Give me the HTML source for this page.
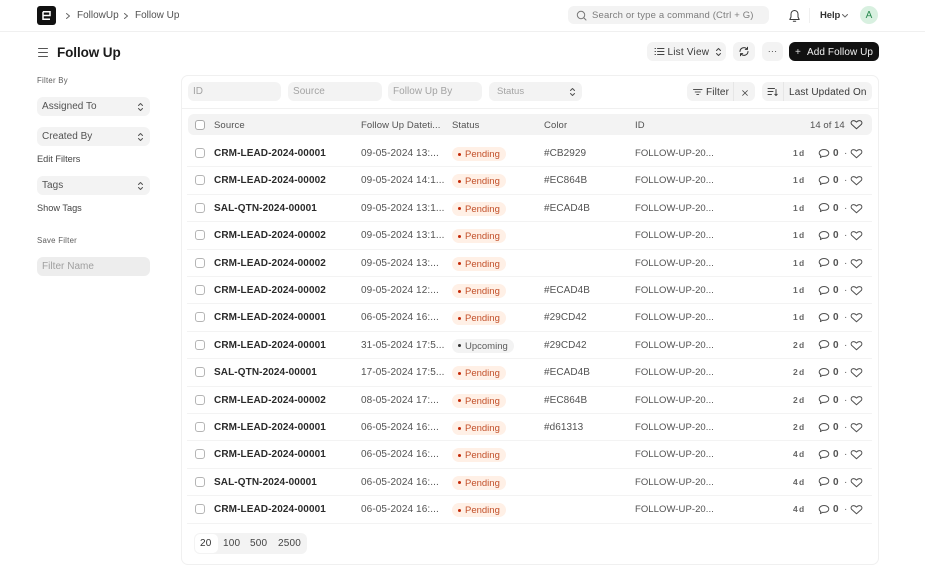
<!DOCTYPE html>
<html><head><meta charset="utf-8"><style>
*{box-sizing:border-box}
html,body{margin:0;padding:0;width:925px;height:572px;overflow:hidden;background:#fff;font-family:"Liberation Sans",sans-serif;color:#383838}
.a{position:absolute;white-space:nowrap}
.t{font-size:10px;line-height:12px;letter-spacing:0}
.box{position:absolute;background:#f3f3f3;border-radius:6px;height:19px;font-size:10px;line-height:20px;letter-spacing:.03px;padding-left:5px;color:#525252}
.ph{color:#a3a3a3}
.r{position:absolute;left:187px;width:685px;height:27.4px}
.r>*{position:absolute;white-space:nowrap}
.cb{left:8px;top:8px;width:10px;height:10px;border:1px solid #b5b5b5;border-radius:3px;background:#fff}
.s{left:27px;top:8px;font-weight:bold;font-size:10px;line-height:12px;letter-spacing:.1px;color:#2b2b2b}
.d{left:174px;top:8px;font-size:10px;line-height:12px;letter-spacing:.1px;color:#525252}
.b{left:265px;top:7px;height:14px;border-radius:7px;font-size:9.5px;line-height:15px;padding:0 6px 0 13px;letter-spacing:0;background:#fff0e6;color:#c2502a}
.b:before{content:"";position:absolute;left:5.5px;top:5.5px;width:3px;height:3px;border-radius:50%;background:#c52a08}
.b.u{background:#f3f3f3;color:#5c5c5c}.b.u:before{background:#333}
.c{left:357px;top:8px;font-size:10px;line-height:12px;letter-spacing:.05px;color:#525252}
.i{left:448px;top:8px;font-size:9.5px;line-height:12px;letter-spacing:.06px;color:#525252}
.w{left:606px;top:7px;font-size:8.5px;line-height:12px;font-weight:bold;word-spacing:-1.5px;letter-spacing:.2px;color:#666}
.n{left:646px;top:8px;font-size:10px;line-height:12px;font-weight:bold;color:#525252}
.o{left:657px;top:8px;font-size:10px;line-height:12px;color:#666}
svg.m{left:631px;top:7.5px}svg.h{left:663px;top:8px}
.l{left:0;right:0;bottom:0;height:1px;background:#f3f3f3}
svg{fill:none;stroke:#525252;stroke-width:1;stroke-linecap:round;stroke-linejoin:round}
.updn{position:absolute;right:6px;top:5px}
.hd{position:absolute;top:120px;font-size:9.5px;line-height:12px;color:#525252;letter-spacing:.1px}
</style></head><body>

<svg width="0" height="0" style="position:absolute"><defs>
<symbol id="bub" viewBox="0 0 12 12"><path d="M6 1.5C3.2 1.5 1.2 3.1 1.2 5C1.2 6.1 1.8 7 2.8 7.6L2.4 9.6L4.6 8.3C5 8.4 5.5 8.4 6 8.4C8.8 8.4 10.8 6.9 10.8 5C10.8 3.1 8.8 1.5 6 1.5Z"/></symbol>
<symbol id="hrt" viewBox="0 0 13 12"><path d="M6.5 9.8L1.5 5.2C.5 3.6 1.5 1.6 3.5 1.6C5 1.6 6 2.5 6.5 3.1C7 2.5 8 1.6 9.5 1.6C11.5 1.6 12.5 3.6 11.5 5.2Z"/></symbol>
<symbol id="ud" viewBox="0 0 7 10"><path d="M1.5 3.5L3.5 1.5L5.5 3.5M1.5 6.5L3.5 8.5L5.5 6.5"/></symbol>
</defs></svg>

<!-- navbar -->
<div class="a" style="left:0;top:31px;width:925px;height:1px;background:#f0f0f0"></div>
<div class="a" style="left:37px;top:6px;width:19px;height:19px;background:#111;border-radius:3px"></div>
<svg class="a" style="left:37px;top:6px;stroke:#fff;stroke-width:1.5;stroke-linecap:butt;stroke-linejoin:miter" width="19" height="19"><path d="M6 5.8H13V9.5H6.7M13 13.2H6V5.8"/></svg>
<svg class="a" style="left:65px;top:12px;stroke:#666" width="6" height="8"><path d="M1.5 1.5L4.5 4L1.5 6.5"/></svg>
<div class="a t" style="left:77px;top:10px;color:#525252">FollowUp</div>
<svg class="a" style="left:123px;top:12px;stroke:#666" width="6" height="8"><path d="M1.5 1.5L4.5 4L1.5 6.5"/></svg>
<div class="a t" style="left:135px;top:10px;color:#525252">Follow Up</div>

<div class="a" style="left:568px;top:6px;width:201px;height:18px;background:#f3f3f3;border-radius:6px"></div>
<svg class="a" style="left:576px;top:10px;stroke:#777" width="11" height="11"><circle cx="5" cy="5" r="3.7"/><path d="M8 8L10 10"/></svg>
<div class="a t" style="left:592px;top:10px;color:#7c7c7c;font-size:9.5px;letter-spacing:.16px">Search or type a command (Ctrl + G)</div>
<svg class="a" style="left:788px;top:9px;stroke:#383838" width="13" height="14"><path d="M6.5 1.5C4.3 1.5 3 3.2 3 5.2V8L1.8 10.5H11.2L10 8V5.2C10 3.2 8.7 1.5 6.5 1.5Z"/><path d="M5.3 12.3H7.7"/></svg>
<div class="a" style="left:809px;top:8px;width:1px;height:15px;background:#f0f0f0"></div>
<div class="a t" style="left:820px;top:9.5px;font-weight:bold;font-size:9.5px;color:#333;letter-spacing:-.1px">Help</div>
<svg class="a" style="left:841px;top:13px;stroke:#666" width="8" height="6"><path d="M1.5 1.5L4 4L6.5 1.5"/></svg>
<div class="a" style="left:860px;top:6px;width:18px;height:18px;border-radius:50%;background:#d8f0e0;color:#2a8a50;font-size:10px;line-height:19px;text-align:center">A</div>

<!-- page head -->
<svg class="a" style="left:38px;top:47px;stroke:#555" width="11" height="11"><path d="M.5 1.5H9.5M.5 5.5H9.5M.5 9.5H9.5"/></svg>
<div class="a" style="left:57px;top:44px;font-size:13.5px;line-height:18px;font-weight:bold;color:#1a1a1a;letter-spacing:-.1px">Follow Up</div>

<div class="a" style="left:647px;top:42px;width:79px;height:19px;background:#f3f3f3;border-radius:6px"></div>
<svg class="a" style="left:654px;top:46px;stroke:#444" width="11" height="11"><path d="M3.5 2.5H10M3.5 5.5H10M3.5 8.5H10M1 2.5H1.5M1 5.5H1.5M1 8.5H1.5"/></svg>
<div class="a t" style="left:667.5px;top:47px;letter-spacing:.2px">List View</div>
<svg class="a" style="left:715px;top:47px;stroke:#444" width="7" height="10"><use href="#ud"/></svg>
<div class="a" style="left:733px;top:42px;width:22px;height:19px;background:#f3f3f3;border-radius:6px"></div>
<svg class="a" style="left:738px;top:46px;stroke:#333" width="12" height="11"><path d="M2 5.5A4 4 0 0 1 9 3M10 5.5A4 4 0 0 1 3 8"/><path d="M9.5 1.2V3.4H7.3M2.5 9.8V7.6H4.7"/></svg>
<div class="a" style="left:762px;top:42px;width:21px;height:19px;background:#f3f3f3;border-radius:6px;text-align:center;font-size:9px;line-height:19px;color:#444;letter-spacing:.2px">···</div>
<div class="a" style="left:789px;top:42px;width:90px;height:19px;background:#111;border-radius:6px;color:#fff"></div>
<div class="a t" style="left:795px;top:47px;color:#ddd">+</div>
<div class="a t" style="left:807px;top:47px;color:#f2f2f2;letter-spacing:.08px">Add Follow Up</div>

<!-- sidebar -->
<div class="a" style="left:37px;top:75px;font-size:7.8px;line-height:11px;color:#5c5c5c;letter-spacing:.25px">Filter By</div>
<div class="box" style="left:37px;top:97px;width:113px">Assigned To<svg class="updn" width="7" height="10"><use href="#ud"/></svg></div>
<div class="box" style="left:37px;top:127px;width:113px">Created By<svg class="updn" width="7" height="10"><use href="#ud"/></svg></div>
<div class="a" style="left:37px;top:154px;font-size:9.2px;line-height:11px;color:#444">Edit Filters</div>
<div class="box" style="left:37px;top:176px;width:113px">Tags<svg class="updn" width="7" height="10"><use href="#ud"/></svg></div>
<div class="a" style="left:37px;top:203px;font-size:9.2px;line-height:11px;color:#444">Show Tags</div>
<div class="a" style="left:37px;top:235px;font-size:7.8px;line-height:11px;color:#5c5c5c;letter-spacing:.25px">Save Filter</div>
<div class="box ph" style="left:37px;top:257px;width:113px;background:#ededed;color:#a0a0a0">Filter Name</div>

<!-- main card -->
<div class="a" style="left:181px;top:75px;width:698px;height:490px;border:1px solid #f0f0f0;border-radius:7px"></div>
<div class="a" style="left:182px;top:108px;width:696px;height:1px;background:#f0f0f0"></div>

<div class="box ph" style="left:188px;top:82px;width:93px">ID</div>
<div class="box ph" style="left:288px;top:82px;width:94px">Source</div>
<div class="box ph" style="left:388px;top:82px;width:94px">Follow Up By</div>
<div class="box ph" style="left:489px;top:82px;width:93px;padding-left:8px;font-size:9.5px">Status<svg class="updn" width="7" height="10"><use href="#ud"/></svg></div>

<div class="a" style="left:687px;top:82px;width:68px;height:19px;background:#f3f3f3;border-radius:6px"></div>
<div class="a" style="left:733px;top:82px;width:1px;height:19px;background:#e6e6e6"></div>
<svg class="a" style="left:693px;top:88px;stroke:#555" width="10" height="8"><path d="M.5 1.5H9M2.2 4H7.3M3.8 6.5H5.7"/></svg>
<div class="a t" style="left:706px;top:87px;letter-spacing:.15px">Filter</div>
<svg class="a" style="left:741px;top:89px;stroke:#444" width="8" height="8"><path d="M1 1L7 7M7 1L1 7" transform="translate(.8 .8) scale(.8)"/></svg>
<div class="a" style="left:762px;top:82px;width:110px;height:19px;background:#f3f3f3;border-radius:6px"></div>
<div class="a" style="left:783px;top:82px;width:1px;height:19px;background:#e6e6e6"></div>
<svg class="a" style="left:767px;top:87px;stroke:#444" width="12" height="10"><path d="M1 1.5H7.5M1 4.5H6M1 7.5H4.5M9 2.5V8.5M7.8 7.3L9 8.5L10.2 7.3"/></svg>
<div class="a t" style="left:789px;top:87px;letter-spacing:.13px">Last Updated On</div>

<!-- header row -->
<div class="a" style="left:188px;top:114px;width:684px;height:21px;background:#f3f3f3;border-radius:6px"></div>
<div class="a" style="left:195px;top:120px;width:10px;height:10px;border:1px solid #aaa;border-radius:3px;background:#fff"></div>
<div class="hd" style="left:214px">Source</div>
<div class="hd" style="left:361px">Follow Up Dateti...</div>
<div class="hd" style="left:452px">Status</div>
<div class="hd" style="left:544px">Color</div>
<div class="hd" style="left:635px">ID</div>
<div class="hd" style="left:810px;letter-spacing:.05px">14 of 14</div>
<svg class="a" style="left:850px;top:119px;stroke:#444" width="13" height="12"><use href="#hrt"/></svg>

<!-- rows -->
<div class="r" style="top:140px"><span class="cb"></span><span class="s">CRM-LEAD-2024-00001</span><span class="d">09-05-2024 13:...</span><span class="b">Pending</span><span class="c">#CB2929</span><span class="i">FOLLOW-UP-20...</span><span class="w">1 d</span><svg class="m" width="12" height="12"><use href="#bub"/></svg><span class="n">0</span><span class="o">·</span><svg class="h" width="13" height="12"><use href="#hrt"/></svg><span class="l"></span></div>
<div class="r" style="top:167.4px"><span class="cb"></span><span class="s">CRM-LEAD-2024-00002</span><span class="d">09-05-2024 14:1...</span><span class="b">Pending</span><span class="c">#EC864B</span><span class="i">FOLLOW-UP-20...</span><span class="w">1 d</span><svg class="m" width="12" height="12"><use href="#bub"/></svg><span class="n">0</span><span class="o">·</span><svg class="h" width="13" height="12"><use href="#hrt"/></svg><span class="l"></span></div>
<div class="r" style="top:194.8px"><span class="cb"></span><span class="s">SAL-QTN-2024-00001</span><span class="d">09-05-2024 13:1...</span><span class="b">Pending</span><span class="c">#ECAD4B</span><span class="i">FOLLOW-UP-20...</span><span class="w">1 d</span><svg class="m" width="12" height="12"><use href="#bub"/></svg><span class="n">0</span><span class="o">·</span><svg class="h" width="13" height="12"><use href="#hrt"/></svg><span class="l"></span></div>
<div class="r" style="top:222.2px"><span class="cb"></span><span class="s">CRM-LEAD-2024-00002</span><span class="d">09-05-2024 13:1...</span><span class="b">Pending</span><span class="i">FOLLOW-UP-20...</span><span class="w">1 d</span><svg class="m" width="12" height="12"><use href="#bub"/></svg><span class="n">0</span><span class="o">·</span><svg class="h" width="13" height="12"><use href="#hrt"/></svg><span class="l"></span></div>
<div class="r" style="top:249.6px"><span class="cb"></span><span class="s">CRM-LEAD-2024-00002</span><span class="d">09-05-2024 13:...</span><span class="b">Pending</span><span class="i">FOLLOW-UP-20...</span><span class="w">1 d</span><svg class="m" width="12" height="12"><use href="#bub"/></svg><span class="n">0</span><span class="o">·</span><svg class="h" width="13" height="12"><use href="#hrt"/></svg><span class="l"></span></div>
<div class="r" style="top:277px"><span class="cb"></span><span class="s">CRM-LEAD-2024-00002</span><span class="d">09-05-2024 12:...</span><span class="b">Pending</span><span class="c">#ECAD4B</span><span class="i">FOLLOW-UP-20...</span><span class="w">1 d</span><svg class="m" width="12" height="12"><use href="#bub"/></svg><span class="n">0</span><span class="o">·</span><svg class="h" width="13" height="12"><use href="#hrt"/></svg><span class="l"></span></div>
<div class="r" style="top:304.4px"><span class="cb"></span><span class="s">CRM-LEAD-2024-00001</span><span class="d">06-05-2024 16:...</span><span class="b">Pending</span><span class="c">#29CD42</span><span class="i">FOLLOW-UP-20...</span><span class="w">1 d</span><svg class="m" width="12" height="12"><use href="#bub"/></svg><span class="n">0</span><span class="o">·</span><svg class="h" width="13" height="12"><use href="#hrt"/></svg><span class="l"></span></div>
<div class="r" style="top:331.8px"><span class="cb"></span><span class="s">CRM-LEAD-2024-00001</span><span class="d">31-05-2024 17:5...</span><span class="b u">Upcoming</span><span class="c">#29CD42</span><span class="i">FOLLOW-UP-20...</span><span class="w">2 d</span><svg class="m" width="12" height="12"><use href="#bub"/></svg><span class="n">0</span><span class="o">·</span><svg class="h" width="13" height="12"><use href="#hrt"/></svg><span class="l"></span></div>
<div class="r" style="top:359.2px"><span class="cb"></span><span class="s">SAL-QTN-2024-00001</span><span class="d">17-05-2024 17:5...</span><span class="b">Pending</span><span class="c">#ECAD4B</span><span class="i">FOLLOW-UP-20...</span><span class="w">2 d</span><svg class="m" width="12" height="12"><use href="#bub"/></svg><span class="n">0</span><span class="o">·</span><svg class="h" width="13" height="12"><use href="#hrt"/></svg><span class="l"></span></div>
<div class="r" style="top:386.6px"><span class="cb"></span><span class="s">CRM-LEAD-2024-00002</span><span class="d">08-05-2024 17:...</span><span class="b">Pending</span><span class="c">#EC864B</span><span class="i">FOLLOW-UP-20...</span><span class="w">2 d</span><svg class="m" width="12" height="12"><use href="#bub"/></svg><span class="n">0</span><span class="o">·</span><svg class="h" width="13" height="12"><use href="#hrt"/></svg><span class="l"></span></div>
<div class="r" style="top:414px"><span class="cb"></span><span class="s">CRM-LEAD-2024-00001</span><span class="d">06-05-2024 16:...</span><span class="b">Pending</span><span class="c">#d61313</span><span class="i">FOLLOW-UP-20...</span><span class="w">2 d</span><svg class="m" width="12" height="12"><use href="#bub"/></svg><span class="n">0</span><span class="o">·</span><svg class="h" width="13" height="12"><use href="#hrt"/></svg><span class="l"></span></div>
<div class="r" style="top:441.4px"><span class="cb"></span><span class="s">CRM-LEAD-2024-00001</span><span class="d">06-05-2024 16:...</span><span class="b">Pending</span><span class="i">FOLLOW-UP-20...</span><span class="w">4 d</span><svg class="m" width="12" height="12"><use href="#bub"/></svg><span class="n">0</span><span class="o">·</span><svg class="h" width="13" height="12"><use href="#hrt"/></svg><span class="l"></span></div>
<div class="r" style="top:468.8px"><span class="cb"></span><span class="s">SAL-QTN-2024-00001</span><span class="d">06-05-2024 16:...</span><span class="b">Pending</span><span class="i">FOLLOW-UP-20...</span><span class="w">4 d</span><svg class="m" width="12" height="12"><use href="#bub"/></svg><span class="n">0</span><span class="o">·</span><svg class="h" width="13" height="12"><use href="#hrt"/></svg><span class="l"></span></div>
<div class="r" style="top:496.2px"><span class="cb"></span><span class="s">CRM-LEAD-2024-00001</span><span class="d">06-05-2024 16:...</span><span class="b">Pending</span><span class="i">FOLLOW-UP-20...</span><span class="w">4 d</span><svg class="m" width="12" height="12"><use href="#bub"/></svg><span class="n">0</span><span class="o">·</span><svg class="h" width="13" height="12"><use href="#hrt"/></svg><span class="l"></span></div>

<!-- pagination -->
<div class="a" style="left:194px;top:533px;width:113px;height:21px;background:#f3f3f3;border-radius:6px"></div>
<div class="a" style="left:195px;top:534px;width:23px;height:19px;background:#fff;border-radius:5px"></div>
<div class="a t" style="left:200px;top:537.5px;color:#333;letter-spacing:.2px">20</div>
<div class="a t" style="left:223px;top:537.5px;color:#444;letter-spacing:.2px">100</div>
<div class="a t" style="left:250px;top:537.5px;color:#444;letter-spacing:.2px">500</div>
<div class="a t" style="left:278px;top:537.5px;color:#444;letter-spacing:.2px">2500</div>
</body></html>
